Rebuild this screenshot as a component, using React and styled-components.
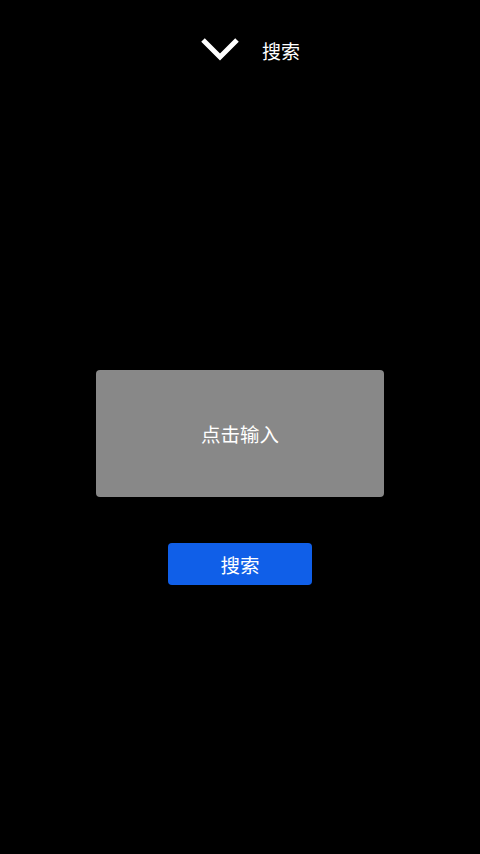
import React from 'react'
import styled, { createGlobalStyle } from 'styled-components'

const GlobalStyle = createGlobalStyle`
  html, body {
    margin: 0;
    padding: 0;
    background: #000;
  }
  body {
    font-family: "Noto Sans CJK SC", "Noto Sans", sans-serif;
    color: #fff;
  }
`

const Page = styled.div`
  width: 480px;
  height: 854px;
  background: #000;
  display: flex;
  flex-direction: column;
  align-items: center;
`

const Header = styled.div`
  width: 100%;
  height: 100px;
  display: flex;
  align-items: center;
  justify-content: center;
  gap: 22px;
  padding-left: 20px;
  box-sizing: border-box;
`

const Title = styled.span`
  font-size: 19px;
  line-height: 1;
  color: #fff;
`

const InputBox = styled.div`
  margin-top: 270px;
  width: 288px;
  height: 127px;
  background: #888888;
  border-radius: 4px;
  display: flex;
  align-items: center;
  justify-content: center;
  font-size: 19.5px;
  color: #fff;
  cursor: text;
`

const SearchButton = styled.button`
  margin-top: 46px;
  width: 144px;
  height: 42px;
  border: none;
  border-radius: 4px;
  background: #105fe8;
  color: #fff;
  font-family: inherit;
  font-size: 19.5px;
  padding: 0;
  cursor: pointer;
`

function Chevron() {
  return (
    <svg width="40" height="26" viewBox="0 0 40 26">
      <polyline points="3,3 20,20 37,3" fill="none" stroke="#fff" strokeWidth="5" strokeLinejoin="miter" />
    </svg>
  )
}

export default function App() {
  return (
    <Page>
      <GlobalStyle />
      <Header>
        <Chevron />
        <Title>搜索</Title>
      </Header>
      <InputBox>点击输入</InputBox>
      <SearchButton>搜索</SearchButton>
    </Page>
  )
}
